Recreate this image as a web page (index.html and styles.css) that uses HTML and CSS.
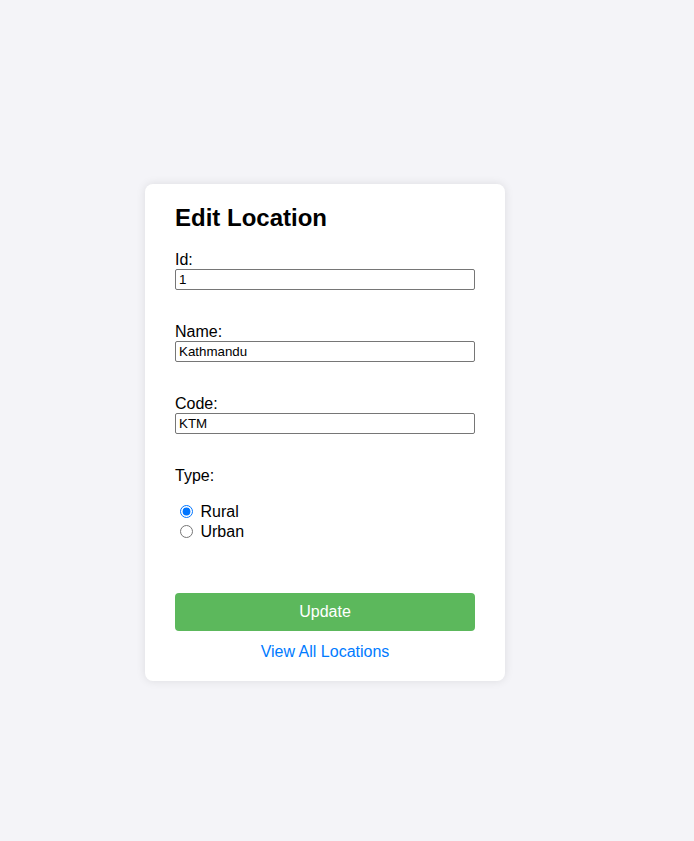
FILE: index.html
```html
<!DOCTYPE html>
<html lang="en">
<head>
<meta charset="utf-8">
<title>Edit Location</title>
<link rel="stylesheet" href="styles.css">
</head>
<body>
<div class="card">
  <h2 class="title">Edit Location</h2>
  <div class="field">
    <label class="label" for="id">Id:</label>
    <input class="input" id="id" type="text" value="1">
  </div>
  <div class="field">
    <label class="label" for="name">Name:</label>
    <input class="input" id="name" type="text" value="Kathmandu">
  </div>
  <div class="field">
    <label class="label" for="code">Code:</label>
    <input class="input" id="code" type="text" value="KTM">
  </div>
  <div class="label type-label">Type:</div>
  <div class="radios">
    <label class="radio-row"><input class="radio" type="radio" name="type" checked> Rural</label>
    <label class="radio-row"><input class="radio" type="radio" name="type"> Urban</label>
  </div>
  <button class="btn" type="button">Update</button>
  <a class="link" href="#">View All Locations</a>
</div>
</body>
</html>
```
FILE: styles.css
```css
html, body {
  margin: 0;
  padding: 0;
}
body {
  background: #f4f4f8;
  font-family: "Liberation Sans", Arial, sans-serif;
  font-size: 16px;
  color: #000;
  min-height: 100vh;
  box-sizing: border-box;
  padding: 24px 44px 0 0;
  display: flex;
  justify-content: center;
  align-items: center;
}
.card {
  width: 300px;
  background: #fff;
  border-radius: 8px;
  box-shadow: 0 0 10px rgba(0, 0, 0, 0.1);
  padding: 20px 30px 20px;
  display: flex;
  flex-direction: column;
}
.title {
  margin: 0 0 18px;
  font-size: 24px;
  line-height: 28px;
  font-weight: bold;
}
.field {
  display: flex;
  flex-direction: column;
  margin-bottom: 32px;
}
.label {
  display: block;
  line-height: 18px;
  padding-top: 1px;
}
.input {
  box-sizing: border-box;
  width: 300px;
  height: 21px;
  margin: 0;
  padding: 1px 3px;
  border: 1px solid #767676;
  border-radius: 2px;
  font-family: "Liberation Sans", Arial, sans-serif;
  font-size: 13.33px;
  color: #000;
}
.type-label {
  margin-bottom: 17px;
}
.radios {
  display: flex;
  flex-direction: column;
  margin-bottom: 51px;
}
.radio-row {
  display: block;
  line-height: 20px;
  height: 20px;
}
.radio {
  margin: 3px 3px 0 5px;
  width: 13px;
  height: 13px;
  vertical-align: -1px;
  accent-color: #0075ff;
}
.btn {
  height: 38px;
  width: 300px;
  border: 0;
  border-radius: 4px;
  background: #5cb85c;
  color: #fff;
  font-family: "Liberation Sans", Arial, sans-serif;
  font-size: 16px;
  margin: 0 0 12px;
  padding: 0;
}
.link {
  display: block;
  text-align: center;
  line-height: 18px;
  color: #007bff;
  text-decoration: none;
}
```
